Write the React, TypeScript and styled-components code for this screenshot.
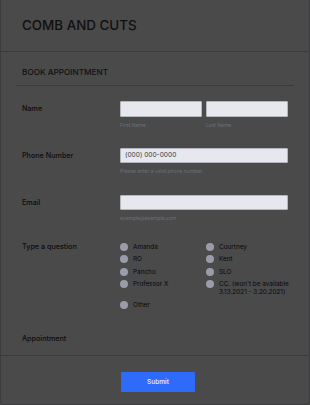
import React from "react";
import styled, { createGlobalStyle } from "styled-components";

const Global = createGlobalStyle`
  html, body { margin: 0; padding: 0; background: #4a4a4a; }
  body { font-family: Inter, "Noto Sans", sans-serif; color: #121212; }
  * { box-sizing: border-box; }
`;

const Card = styled.div`
  width: 310px;
  height: 405px;
  background: #4a4a4a;
  border: 1px solid #3c3c3e;
  border-top: none;
  border-radius: 0 0 4px 4px;
  display: flex;
  flex-direction: column;
  overflow: hidden;
`;

const Header = styled.header`
  height: 52px;
  flex: none;
  display: flex;
  align-items: center;
  padding: 0 0 2px 21px;
  border-bottom: 1px solid #3b3b3f;
`;

const Title = styled.h1`
  margin: 0;
  font-size: 13.4px;
  font-weight: 500;
  line-height: 16px;
  color: #101010;
`;

const Section = styled.div`
  padding: 0 15px 0 15px;
`;

const SectionHead = styled.div`
  padding: 14px 0 7px 6px;
  border-bottom: 1px solid #3b3b3f;
  font-size: 8.2px;
  font-weight: 500;
  line-height: 12px;
  color: #101010;
`;

const Form = styled.div`
  flex: 1;
  padding: 15px 0 0 21px;
`;

const Row = styled.div<{ $pb: number }>`
  display: grid;
  grid-template-columns: 98px 168px;
  align-items: start;
  padding-bottom: ${(p) => p.$pb}px;
`;

const Label = styled.div<{ $compact?: boolean }>`
  font-size: 7.2px;
  font-weight: 500;
  line-height: ${(p) => (p.$compact ? "8px" : "15px")};
  margin-top: ${(p) => (p.$compact ? "1px" : "0")};
  color: #0c0c0c;
`;

const Pair = styled.div`
  display: grid;
  grid-template-columns: 1fr 1fr;
  column-gap: 4px;
`;

const Field = styled.div`
  display: flex;
  flex-direction: column;
`;

const Input = styled.div`
  height: 15.5px;
  background: #e7e8ed;
  border: 1px solid #b3b5bf;
  border-radius: 1px;
  display: flex;
  align-items: center;
  padding-left: 4px;
  font-size: 6.6px;
  color: #353846;
`;

const Sub = styled.div`
  margin-top: 4px;
  font-size: 5px;
  line-height: 9px;
  color: #6d6f7b;
`;

const Radios = styled.div`
  display: grid;
  grid-template-columns: 86px 100px;
  row-gap: 4.6px;
  padding-top: 0.5px;
`;

const Radio = styled.div`
  display: flex;
  align-items: flex-start;
  gap: 5px;
  font-size: 6.4px;
  line-height: 8px;
  color: #080808;
`;

const RadioText = styled.span`
  max-width: 72px;
`;

const Dot = styled.span`
  flex: none;
  width: 8px;
  height: 8px;
  border-radius: 50%;
  background: #9a9caa;
`;

const Footer = styled.div`
  flex: none;
  height: 49px;
  border-top: 1px solid #3a3a3d;
  padding: 12px 0 0 120px;
`;

const Submit = styled.button`
  width: 74px;
  height: 19.5px;
  border: none;
  border-radius: 1px;
  background: #2f6bfb;
  color: #eef1ff;
  font-family: Inter, sans-serif;
  font-size: 6.6px;
  font-weight: 500;
  padding: 0;
`;

const people: string[] = [
  "Amanda",
  "Courtney",
  "RO",
  "Kent",
  "Pancho",
  "SLO",
  "Professor X",
  "CC. (won't be available 3.13.2021 - 3.20.2021)",
  "Other",
];

export default function App() {
  return (
    <>
      <Global />
      <Card>
        <Header>
          <Title>COMB AND CUTS</Title>
        </Header>
        <Section>
          <SectionHead>BOOK APPOINTMENT</SectionHead>
        </Section>
        <Form>
          <Row $pb={18}>
            <Label>Name</Label>
            <Pair>
              <Field>
                <Input />
                <Sub>First Name</Sub>
              </Field>
              <Field>
                <Input />
                <Sub>Last Name</Sub>
              </Field>
            </Pair>
          </Row>
          <Row $pb={18.5}>
            <Label>Phone Number</Label>
            <Field>
              <Input>(000) 000-0000</Input>
              <Sub>Please enter a valid phone number.</Sub>
            </Field>
          </Row>
          <Row $pb={19}>
            <Label>Email</Label>
            <Field>
              <Input />
              <Sub>example@example.com</Sub>
            </Field>
          </Row>
          <Row $pb={22}>
            <Label $compact>Type a question</Label>
            <Radios>
              {people.map((n) => (
                <Radio key={n}>
                  <Dot />
                  <RadioText>{n}</RadioText>
                </Radio>
              ))}
            </Radios>
          </Row>
          <Row $pb={0}>
            <Label>Appointment</Label>
          </Row>
        </Form>
        <Footer>
          <Submit>Submit</Submit>
        </Footer>
      </Card>
    </>
  );
}
